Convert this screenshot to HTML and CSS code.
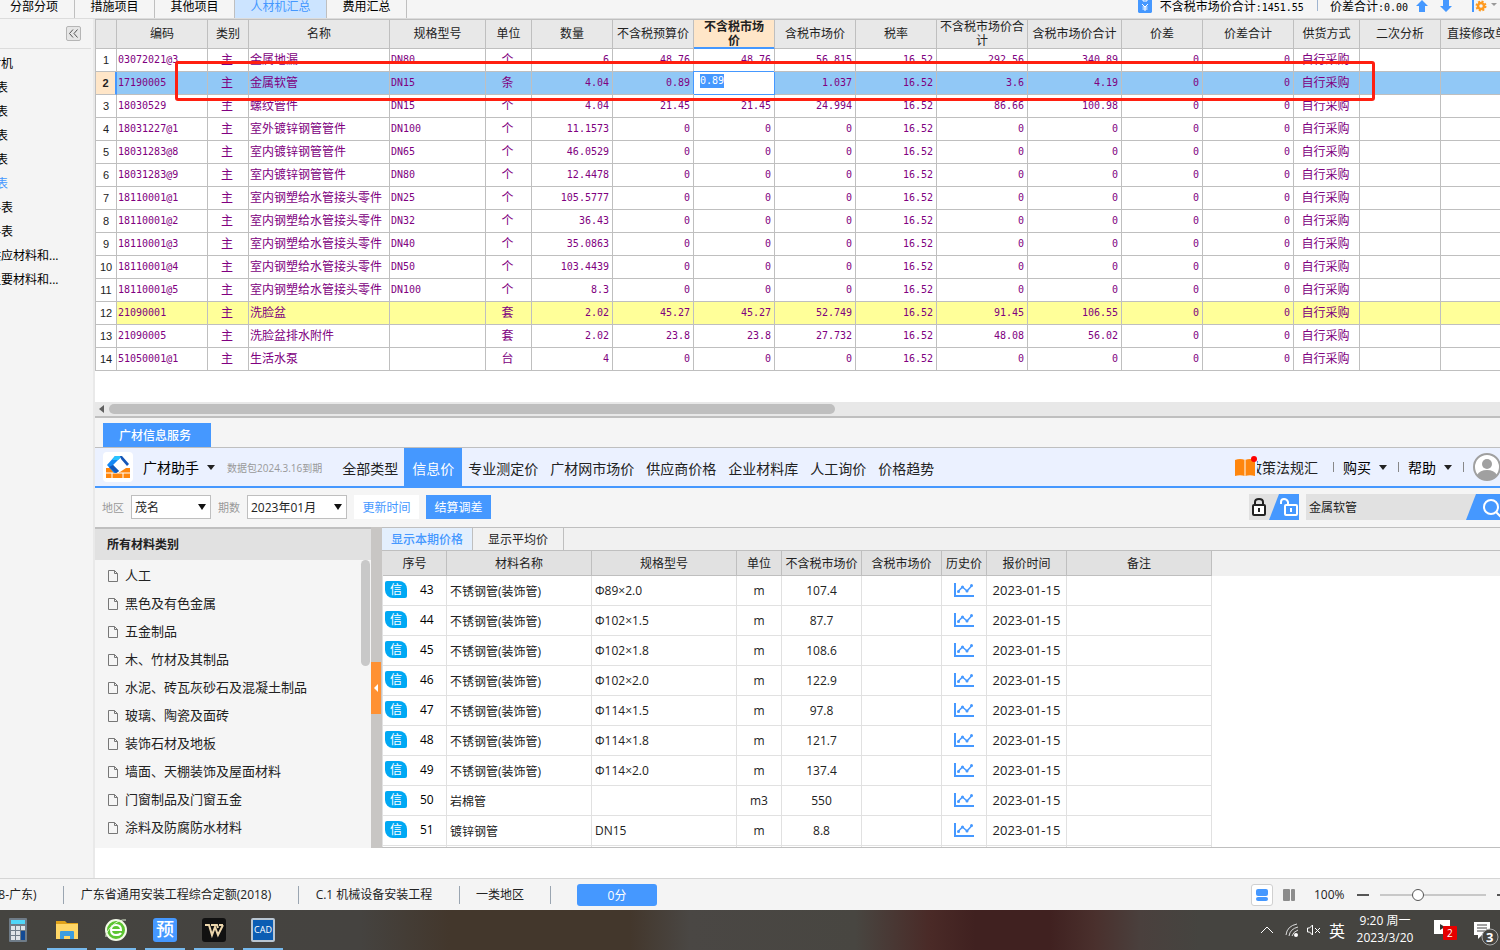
FILE: index.html
```html
<!DOCTYPE html>
<html lang="zh-CN">

<head>
  <meta charset="UTF-8" />
  <meta name="viewport" content="width=device-width, initial-scale=1.0" />
  <title>人材机汇总</title>
  <link rel="stylesheet" href="styles.css">
</head>

<body>
  <header class="top-bar">
    <nav class="top-tabs">
      <a href="#" class="w75">分部分项</a>
      <a href="#">措施项目</a>
      <a href="#">其他项目</a>
      <a href="#" class="active">人材机汇总</a>
      <a href="#">费用汇总</a>
    </nav>
    <div class="totals">
      <svg width="14" height="13" viewBox="0 0 14 13">
        <path d="M0 0h14v12l-1 1H1l-1-1z" fill="#4598ff" />
        <path d="M5 0v1h4V0M4 4l3 3 3-3M7 7v4M4.500 7h5M4.500 9h5" fill="none" stroke="#fff" />
      </svg>
      <span>不含税市场价合计<span class="mono">:1451.55</span></span>
      <i class="sep"></i>
      <span>价差合计<span class="mono">:0.00</span></span>
      <svg class="arrow" width="12" height="12" viewBox="0 0 12 12"><path d="M6 0l6 6H9v6H3V6H0z" fill="#4598ff" /></svg>
      <svg class="arrow" width="12" height="12" viewBox="0 0 12 12"><path d="M6 12l6-6H9V0H3v6H0z" fill="#4598ff" /></svg>
      <svg class="gear" width="26" height="12" viewBox="0 0 26 12">
        <path d="M0 0h2v12H0z" fill="#4598ff" />
        <circle cx="9" cy="6" r="3" fill="none" stroke="#ff9a1f" stroke-width="2.500" />
        <circle cx="9" cy="6" r="4.500" fill="none" stroke="#ff9a1f" stroke-width="2" stroke-dasharray="2 1.530" />
        <path d="M19 3h6l-3 3z" fill="#999" />
      </svg>
    </div>
  </header>

  <div class="workspace">
    <aside class="sidebar">
      <div class="sidebar-head">
        <button class="collapse" aria-label="收起">
          <svg width="9" height="9" viewBox="0 0 9 9"><path d="M4 0.500L0.500 4.500L4 8.500M8.500 0.500L5 4.500L8.500 8.500" fill="none" stroke="#555" /></svg>
        </button>
      </div>
      <ul class="report-list">
        <li class="wide">材机</li>
        <li>表</li>
        <li>表</li>
        <li>表</li>
        <li>表</li>
        <li class="current">表</li>
        <li class="wide">料表</li>
        <li class="wide">料表</li>
        <li class="wide">供应材料和...</li>
        <li class="wide">主要材料和...</li>
      </ul>
    </aside>

    <main class="main">
      <section class="grid-area">
        <table class="grid">
          <colgroup>
            <col class="c21"><col class="c91"><col class="c41"><col class="c141"><col class="c96"><col class="c46">
            <col class="c81"><col class="c81"><col class="c81"><col class="c81"><col class="c81"><col class="c91">
            <col class="c94"><col class="c81"><col class="c91"><col class="c66"><col class="c81"><col class="c91">
          </colgroup>
          <thead>
            <tr>
              <th></th><th>编码</th><th>类别</th><th>名称</th><th>规格型号</th><th>单位</th><th>数量</th>
              <th>不含税预算价</th><th class="focus">不含税市场<br>价</th><th>含税市场价</th><th>税率</th>
              <th>不含税市场价合<br>计</th><th>含税市场价合计</th><th>价差</th><th>价差合计</th><th>供货方式</th>
              <th>二次分析</th><th class="last">直接修改单价</th>
            </tr>
          </thead>
          <tbody id="gridBody"></tbody>
        </table>
        <div class="mark"></div>
      </section>
      <div class="h-scroll">
        <svg width="6" height="8" viewBox="0 0 6 8"><path d="M5 0v8L0 4z" fill="#606060" /></svg>
        <div class="thumb"></div>
      </div>

      <div class="service-head"><button class="service-tab">广材信息服务</button></div>

      <div class="helper-bar">
        <svg class="logo" width="30" height="30" viewBox="0 0 30 30">
          <rect width="30" height="30" rx="4" fill="#fff" />
          <path d="M3 16h5l5 4h4l6-4h4v10H3z" fill="#ff860d" />
          <path d="M3 21h24M15 20v1M9 21v5M20 21v5M15 21l4-4" stroke="#fff" fill="none" />
          <path d="M4 13l8-9h7L10 13l6 6-3 2H11z" fill="#1487f5" />
          <path d="M12 4h7l-4 4H9z" fill="#29c3ff" />
          <path d="M17 4h2l7 8-2 2-6-7zM10 13l6 6-3 2-7-6z" fill="#1456b8" />
        </svg>
        <button class="menu helper-name">广材助手</button>
        <span class="expiry">数据包2024.3.16到期</span>
        <nav class="price-nav">
          <a href="#">全部类型</a>
          <a href="#" class="active">信息价</a>
          <a href="#">专业测定价</a>
          <a href="#">广材网市场价</a>
          <a href="#">供应商价格</a>
          <a href="#">企业材料库</a>
          <a href="#">人工询价</a>
          <a href="#">价格趋势</a>
        </nav>
        <div class="account">
          <svg width="22" height="22" viewBox="0 0 22 22">
            <path d="M0 4q5-2 10 0v16q-5-1.500-10 0zM10 4q5-2 10 0v16q-5-1.500-10 0z" fill="#ff860d" />
            <path d="M10 4v16" stroke="#ffc182" stroke-width="2" />
            <circle cx="19" cy="3" r="3" fill="#f00" />
          </svg>
          <a href="#" class="policy"><span>政策法规汇</span></a>
          <i class="sep"></i>
          <button class="menu">购买</button>
          <i class="sep"></i>
          <button class="menu">帮助</button>
          <i class="sep"></i>
          <svg class="avatar" width="28" height="28" viewBox="0 0 28 28">
            <circle cx="14" cy="14" r="13" fill="#fff" stroke="#a0a0a0" stroke-width="2" />
            <circle cx="14" cy="11" r="5" fill="#a0a0a0" />
            <path d="M4 22q3-5 10-5t10 5q-4 5-10 5T4 22z" fill="#a0a0a0" />
          </svg>
        </div>
      </div>

      <div class="filters">
        <label for="area">地区</label>
        <span class="select area"><select id="area"><option>茂名</option></select></span>
        <label for="period">期数</label>
        <span class="select period"><select id="period"><option>2023年01月</option></select></span>
        <button class="btn">更新时间</button>
        <button class="btn primary">结算调差</button>
        <div class="search">
          <button class="lock" aria-label="锁定">
            <svg width="50" height="26" viewBox="0 0 50 26">
              <path d="M0 0h50v26H0z" fill="#e1e1e1" />
              <path d="M30 0h20v26H20z" fill="#4598ff" />
              <rect x="4" y="11" width="12" height="10" rx="1" fill="#fff" stroke="#222" stroke-width="2" />
              <path d="M6 11V8q0-3 4-3t4 3v3" fill="none" stroke="#222" stroke-width="2" />
              <path d="M10 14v4" stroke="#222" stroke-width="2" />
              <rect x="36" y="11" width="12" height="10" rx="1" fill="none" stroke="#fff" stroke-width="2" />
              <path d="M32 10V8q0-3 3-3t4 3v3M42 14v4" fill="none" stroke="#fff" stroke-width="2" />
            </svg>
          </button>
          <input type="text" value="金属软管" aria-label="搜索材料">
          <button class="find" aria-label="搜索">
            <svg width="34" height="26" viewBox="0 0 34 26">
              <path d="M0 26L10 0h24v26z" fill="#4598ff" />
              <circle cx="25" cy="13" r="7" fill="none" stroke="#fff" stroke-width="2" />
              <path d="M30 18l5 5" stroke="#fff" stroke-width="2" />
            </svg>
          </button>
        </div>
      </div>

      <div class="lower">
        <section class="categories">
          <h2>所有材料类别</h2>
          <ul id="categoryList"></ul>
          <div class="v-thumb"></div>
        </section>
        <div class="splitter">
          <button aria-label="收起分类"><svg width="4" height="8" viewBox="0 0 4 8"><path d="M4 0v8L0 4z" fill="#fff" /></svg></button>
        </div>
        <section class="prices">
          <div class="price-tabs">
            <button class="active">显示本期价格</button>
            <button>显示平均价</button>
          </div>
          <div class="price-body">
            <table class="price-table">
              <colgroup>
                <col class="p64"><col class="p145"><col class="p145"><col class="p45"><col class="p80">
                <col class="p80"><col class="p45"><col class="p80"><col class="p145">
              </colgroup>
              <thead>
                <tr>
                  <th>序号</th><th>材料名称</th><th>规格型号</th><th>单位</th><th>不含税市场价</th>
                  <th>含税市场价</th><th>历史价</th><th>报价时间</th><th>备注</th>
                </tr>
              </thead>
              <tbody id="priceBody"></tbody>
            </table>
          </div>
        </section>
      </div>
    </main>
  </div>

  <footer class="status">
    <span class="s-first">8-广东)</span>
    <span class="s-quota">广东省通用安装工程综合定额(2018)</span>
    <span class="s-work">C.1 机械设备安装工程</span>
    <span class="s-area">一类地区</span>
    <button class="score">0分</button>
    <div class="zoom">
      <button class="view on" aria-label="上下视图"><svg width="12" height="12" viewBox="0 0 12 12"><rect width="12" height="7" rx="2" fill="#4598ff" /><rect y="8" width="12" height="4" rx="2" fill="#4598ff" /></svg></button>
      <button class="view" aria-label="左右视图"><svg width="12" height="12" viewBox="0 0 12 12"><rect width="7" height="12" rx="1" fill="#8c8c8c" /><rect x="8" width="4" height="12" rx="1" fill="#8c8c8c" /></svg></button>
      <label for="zoomRange">100%</label>
      <svg width="12" height="2" viewBox="0 0 12 2"><path d="M0 0h12v2H0z" fill="#555" /></svg>
      <input type="range" id="zoomRange" min="0" max="100" value="34">
      <svg width="3" height="2" viewBox="0 0 3 2"><path d="M0 0h3v2H0z" fill="#555" /></svg>
    </div>
  </footer>

  <div class="taskbar">
    <div class="apps">
      <button aria-label="计算器">
        <svg width="24" height="24" viewBox="0 0 24 24">
          <rect x="3" width="18" height="24" rx="1" fill="#6f7c88" />
          <path d="M5 2h14v4H5z" fill="#4fd6f8" />
          <path d="M5 8h4v4H5zM10 8h4v4h-4zM15 8h4v4h-4zM5 13h4v4H5zM10 13h4v4h-4zM5 18h4v4H5zM10 18h4v4h-4z" fill="#dfe4e8" />
          <path d="M15 13h4v9h-4z" fill="#124a94" />
        </svg>
      </button>
      <button class="open" aria-label="文件资源管理器">
        <svg width="24" height="24" viewBox="0 0 24 24">
          <path d="M1 3h9l2 2h11v16H1z" fill="#e0a21a" />
          <path d="M1 6h22v15H1z" fill="#ffd767" />
          <path d="M5 21v-7q0-1 1-1h12q1 0 1 1v7h-4v-3H9v3z" fill="#3c9de0" />
        </svg>
      </button>
      <button class="open" aria-label="浏览器">
        <svg width="24" height="24" viewBox="0 0 24 24">
          <circle cx="12" cy="12" r="10" fill="#5cc431" stroke="#f4fbe9" stroke-width="2" />
          <path d="M7 12h10q0-5-5-5t-5 5q0 5 5 5 4 0 5-2" fill="none" stroke="#fff" stroke-width="2" />
          <path d="M2 19Q1 15 8 8t14-6" fill="none" stroke="#e6f7d8" />
        </svg>
      </button>
      <button class="open"><span class="budget">预</span></button>
      <button class="open" aria-label="文档">
        <svg width="24" height="24" viewBox="0 0 24 24">
          <rect width="24" height="24" rx="3" fill="#111" />
          <path d="M3 7h4l3 10 3-8 3 8 5-10M9 7h6l1 3M17 7h4" fill="none" stroke="#ecd6ac" stroke-width="2" />
        </svg>
      </button>
      <button class="open"><span class="cad">CAD</span></button>
    </div>
    <div class="tray">
      <svg width="12" height="8" viewBox="0 0 12 8"><path d="M0 7l6-6 6 6" fill="none" stroke="#fff" /></svg>
      <svg width="14" height="14" viewBox="0 0 14 14">
        <path d="M1 12Q2 3 12 1M4 13Q5 6 13 4M7 13Q8 9 13 7" fill="none" stroke="#ddd" />
        <circle cx="11" cy="12" r="2" fill="#fff" />
      </svg>
      <svg width="14" height="12" viewBox="0 0 14 12"><path d="M0.500 4h2l3-3v10l-3-3h-2zM8 4l5 5M13 4l-5 5" fill="none" stroke="#fff" /></svg>
      <span class="ime">英</span>
      <div class="clock">9:20 周一<br>2023/3/20</div>
      <svg class="video" width="24" height="22" viewBox="0 0 24 22">
        <path d="M0 1h16v14H0z" fill="#fff" /><path d="M6 5v6l5-3z" fill="#333" />
        <rect x="9" y="7" width="14" height="14" rx="1" fill="#e60000" />
        <text x="13" y="18">2</text>
      </svg>
      <svg class="notice" width="26" height="26" viewBox="0 0 26 26">
        <path d="M0 2h16v13H8l-4 4v-4H0z" fill="#fff" /><path d="M3 5h10M3 8h10M3 11h10" stroke="#444" />
        <circle cx="16" cy="17" r="8" fill="#454440" stroke="#aaa" />
        <text x="12" y="22">3</text>
      </svg>
    </div>
  </div>
  <script src="script.js"></script>
</body>

</html>
```

FILE: styles.css
```css
* {
  box-sizing: border-box;
}

body {
  margin: 0;
  height: 100vh;
  display: flex;
  flex-direction: column;
  overflow: hidden;
  font-family: "Open Sans", "Noto Sans CJK SC", sans-serif;
  font-size: 12px;
  color: #222;
  background: #f5f5f5;
}

button,
input,
select {
  font: inherit;
  color: inherit;
  border: none;
  padding: 0;
  margin: 0;
  background: none;
}

a {
  color: inherit;
  text-decoration: none;
}

ul {
  list-style: none;
  margin: 0;
  padding: 0;
}

svg {
  display: block;
  flex: none;
}

.mono {
  font-family: "DejaVu Sans Mono", monospace;
  font-size: 10px;
}

/* top tabs */
.top-bar {
  flex: none;
  height: 19px;
  display: flex;
  justify-content: space-between;
  line-height: 14px;
  color: #000;
  border-bottom: 1px solid #dcdcdc;
}

.top-tabs {
  display: flex;
}

.top-tabs a {
  width: 80px;
  text-align: center;
  border-right: 1px solid #bfbfbf;
}

.top-tabs .w75 {
  width: 75px;
  padding-right: 6px;
}

.top-tabs .active {
  width: 92px;
  background: #cce4ff;
  color: #4598ff;
}

.totals {
  display: flex;
  padding-right: 2px;
  gap: 8px;
}

.totals .sep {
  width: 1px;
  height: 11px;
  margin: 0 4px 0 5px;
  background: #9fb4d0;
}

.totals .arrow {
  margin-right: 4px;
}

.totals .gear {
  margin-left: 8px;
}

/* left sidebar */
.workspace {
  flex: 1;
  min-height: 0;
  display: flex;
}

.sidebar {
  flex: none;
  width: 95px;
  overflow: hidden;
  background: #f4f4f4;
  border-right: 2px solid #e9e9e9;
}

.sidebar-head {
  display: flex;
  justify-content: flex-end;
  height: 30px;
  padding: 7px 10px 0 0;
  margin-right: 2px;
  border-bottom: 1px solid #dcdcdc;
}

.collapse {
  width: 15px;
  height: 15px;
  display: flex;
  align-items: center;
  justify-content: center;
  background: #e6e6e6;
  border: 1px solid #b5b5b5;
  border-radius: 2px;
}

.report-list {
  padding-top: 3px;
  color: #000;
}

.report-list li {
  height: 24px;
  line-height: 24px;
  margin-left: -4px;
  white-space: nowrap;
}

.report-list .wide {
  margin-left: -11px;
}

.report-list .current {
  color: #4598ff;
}

.main {
  flex: 1;
  min-width: 0;
  display: flex;
  flex-direction: column;
  background: #fff;
}

/* material grid */
.grid-area {
  flex: 1;
  min-height: 0;
  position: relative;
  overflow: hidden;
}

.grid {
  width: 1436px;
  table-layout: fixed;
  border-collapse: separate;
  border-spacing: 0;
  border-top: 1px solid #bfbfbf;
  border-left: 1px solid #bfbfbf;
}

.c21 { width: 21px; }
.c41 { width: 41px; }
.c46 { width: 46px; }
.c66 { width: 66px; }
.c81 { width: 81px; }
.c91 { width: 91px; }
.c94 { width: 94px; }
.c96 { width: 96px; }
.c141 { width: 141px; }

.grid th,
.grid td {
  border-right: 1px solid #bfbfbf;
  border-bottom: 1px solid #bfbfbf;
  white-space: nowrap;
}

.grid th {
  height: 29px;
  padding: 0;
  line-height: 14px;
  font-weight: normal;
  background: #e8e8e8;
}

.grid th.last {
  padding-right: 6px;
}

.grid th.focus {
  font-weight: bold;
  background: #ffe6c8;
  border-bottom-color: #4598ff;
  box-shadow: inset 0 -1px #4598ff;
}

.grid td {
  height: 23px;
  padding: 1px 3px 1px 1px;
  line-height: 20px;
  color: #800080;
}

.grid .no {
  padding: 0;
  text-align: center;
  color: #222;
  font-family: "Liberation Sans", sans-serif;
  font-size: 11px;
}

.grid .mid {
  text-align: center;
}

.grid .num {
  text-align: right;
}

.grid .selected td {
  background: #91c8f6;
}

.grid .selected .no {
  font-weight: bold;
  background: #ffe6c8;
  border-right: 2px solid #4598ff;
}

.grid .yellow td:not(.no) {
  background: #ffff99;
}

.grid .selected .editing {
  padding: 0 6px 5px;
  background: #fff;
  border-color: #4598ff;
  box-shadow: -1px -1px #4598ff;
}

.editing input {
  display: block;
  width: 24px;
  height: 14px;
  background: #4598ff;
  color: #fff;
}

.mark {
  position: absolute;
  top: 42px;
  left: 80px;
  width: 1200px;
  height: 40px;
  border: 3px solid #ff1f10;
  border-radius: 3px;
}

.h-scroll {
  flex: none;
  height: 16px;
  display: flex;
  align-items: center;
  gap: 8px;
  background: #e8e8e8;
  border-bottom: 2px solid #bfbfbf;
}

.h-scroll svg {
  margin-left: 4px;
  margin-right: -4px;
}

.h-scroll .thumb {
  width: calc(52% - 5px);
  height: 10px;
  border-radius: 5px;
  background: #bfbfbf;
}

/* price service */
.service-head {
  flex: none;
  height: 30px;
  padding: 5px 8px 0;
  background: #f5f5f5;
  border-bottom: 1px solid #bfbfbf;
}

.service-tab {
  display: block;
  width: 108px;
  height: 24px;
  padding-right: 4px;
  color: #fff;
  background: #4598ff;
  font-weight: 500;
}

.helper-bar {
  flex: none;
  height: 40px;
  display: flex;
  align-items: center;
  padding-left: 8px;
  font-size: 14px;
  background: #ebf1ff;
  border-bottom: 2px solid #4598ff;
  white-space: nowrap;
}

.menu {
  display: flex;
  align-items: center;
  gap: 8px;
  color: #000;
}

.menu::after {
  content: "";
  border: 4px solid transparent;
  border-top: 5px solid #222;
  border-bottom: none;
}

.helper-name {
  margin-left: 10px;
}

.expiry {
  margin: 0 14px 0 12px;
  font-size: 10px;
  color: #999;
}

.price-nav {
  display: flex;
  height: 38px;
  line-height: 42px;
}

.price-nav a {
  padding: 0 6px;
}

.price-nav .active {
  padding: 0 8px;
  color: #fff;
  background: #4598ff;
}

.account {
  display: flex;
  align-items: center;
  margin-left: auto;
  margin-right: -1px;
}

.policy {
  display: flex;
  justify-content: flex-end;
  width: 61px;
  overflow: hidden;
}

.account .sep {
  width: 1px;
  height: 10px;
  margin: 0 9px 0 11px;
  background: #888;
}

.account .policy + .sep {
  margin-left: 15px;
}

.filters {
  flex: none;
  height: 39px;
  display: flex;
  align-items: center;
  gap: 7px;
  padding-left: 7px;
  padding-bottom: 1px;
  background: #f5f5f5;
}

.filters label {
  width: 22px;
  font-size: 11px;
  color: #999;
}

.select {
  position: relative;
}

.select.area {
  width: 80px;
}

.select.period {
  width: 100px;
}

.select select {
  display: block;
  width: 100%;
  height: 24px;
  padding-left: 3px;
  appearance: none;
  background: #fff;
  border: 1px solid #bfbfbf;
}

.select::after {
  content: "";
  position: absolute;
  right: 5px;
  top: 9px;
  border: 4px solid transparent;
  border-top: 6px solid #111;
  border-bottom: none;
}

.btn {
  width: 65px;
  height: 24px;
  color: #4598ff;
  background: #fff;
}

.btn.primary {
  color: #fff;
  background: #4598ff;
}

.search {
  display: flex;
  margin-left: auto;
}

.search input {
  width: 160px;
  height: 26px;
  margin-left: 7px;
  padding-left: 3px;
  background: #e1e1e1;
}

.find {
  background: #e1e1e1;
}

.lower {
  flex: none;
  height: 321px;
  margin-bottom: 30px;
  display: flex;
}

.categories {
  position: relative;
  flex: none;
  width: 276px;
  background: #f5f5f5;
  border-top: 2px solid #bfbfbf;
}

.categories h2 {
  margin: 0;
  padding-left: 12px;
  font-size: 12px;
  line-height: 31px;
  background: #e1e1e1;
}

.categories ul {
  padding: 0 0 0 13px;
}

.categories li {
  display: flex;
  align-items: center;
  gap: 7px;
  height: 28px;
  font-size: 13px;
}

.categories li svg {
  margin-top: 3px;
}

.v-thumb {
  position: absolute;
  top: 31px;
  right: 1px;
  width: 9px;
  height: 106px;
  border-radius: 5px;
  background: #c8c8c8;
}

.splitter {
  flex: none;
  width: 11px;
  padding-top: 135px;
  background: #c8c6c4;
}

.splitter button {
  display: flex;
  align-items: center;
  justify-content: center;
  width: 10px;
  height: 52px;
  background: #ff9133;
}

.prices {
  flex: 1;
  min-width: 0;
  display: flex;
  flex-direction: column;
  overflow: hidden;
  border-top: 1px solid #bfbfbf;
  border-bottom: 1px solid #bfbfbf;
}

.price-tabs {
  flex: none;
  display: flex;
  height: 23px;
  background: #f1f1f1;
  border-bottom: 1px solid #bfbfbf;
}

.price-tabs button {
  width: 91px;
  border-right: 1px solid #bfbfbf;
}

.price-tabs .active {
  color: #4598ff;
  font-weight: 500;
  background: #e3effd;
}

.price-body {
  flex: 1;
  min-height: 0;
  overflow: hidden;
  background: linear-gradient(#f0f0f0 25px, #fff 25px);
}

.price-table {
  width: 830px;
  table-layout: fixed;
  border-collapse: separate;
  border-spacing: 0;
  border-left: 1px solid #e1e1e1;
}

.p45 { width: 45px; }
.p64 { width: 64px; }
.p80 { width: 80px; }
.p145 { width: 145px; }

.price-table th {
  height: 25px;
  padding: 0;
  font-weight: normal;
  white-space: nowrap;
  background: #e1e1e1;
  border-right: 1px solid #bfbfbf;
  border-bottom: 1px solid #bfbfbf;
}

.price-table td {
  height: 30px;
  padding: 0 3px;
  text-align: center;
  background: #fff;
  border-right: 1px solid #e1e1e1;
  border-bottom: 1px solid #e1e1e1;
}

.price-table td:first-child {
  padding: 0 2px 2px;
}

.price-table .left {
  text-align: left;
}

.price-table .date {
  padding-bottom: 2px;
  font-size: 13px;
}

.price-table .chart {
  padding-bottom: 2px;
}

.chart svg {
  margin: 0 auto;
}

.serial {
  display: flex;
  align-items: center;
  gap: 13px;
  color: #000;
}

.badge {
  width: 22px;
  height: 17px;
  line-height: 17px;
  color: #fff;
  background: #00a8f3;
  border-radius: 2px 8px 2px 8px;
}

/* status bar */
.status {
  flex: none;
  height: 32px;
  display: flex;
  align-items: center;
  background: #f4f4f4;
  border-top: 1px solid #d5d5d5;
  white-space: nowrap;
}

.status > span {
  height: 18px;
  line-height: 18px;
  text-align: center;
  border-right: 1px solid #9aa5b1;
}

.s-first {
  width: 67px;
  margin-left: -3px;
  padding-right: 25px;
}

.s-quota {
  width: 235px;
  padding-right: 10px;
}

.s-work {
  width: 161px;
  padding-right: 10px;
}

.s-area {
  width: 91px;
  padding-right: 10px;
}

.score {
  width: 80px;
  height: 22px;
  margin-left: 26px;
  color: #fff;
  background: #4598ff;
  border-radius: 3px;
}

.zoom {
  display: flex;
  align-items: center;
  margin-left: auto;
}

.view {
  display: flex;
  align-items: center;
  justify-content: center;
  width: 22px;
  height: 22px;
  margin-right: 5px;
  border: 1px solid transparent;
  border-radius: 3px;
}

.view.on {
  background: #fff;
  border-color: #d0d0d0;
}

.zoom label {
  width: 43px;
  margin-left: 9px;
}

.zoom input {
  appearance: none;
  width: 106px;
  height: 12px;
  margin: 0 11px;
  background: linear-gradient(transparent 5px, #c8c8c8 5px, #c8c8c8 7px, transparent 7px);
}

.zoom input::-webkit-slider-thumb {
  appearance: none;
  width: 12px;
  height: 12px;
  border: 1px solid #555;
  border-radius: 50%;
  background: #fff;
}

/* system taskbar */
.taskbar {
  flex: none;
  height: 40px;
  display: flex;
  justify-content: space-between;
  color: #fff;
  background: linear-gradient(to right, #454440, #454340 24%, #43372c 30%, #43372c 42%, #4a4744 46%, #484641 57%, #4a2a27 62%, #402120 65%, #402120 70%, #4a302d 73%, #4a403d 76%, #454440 80%);
}

.apps {
  display: flex;
  gap: 9px;
  margin-left: -2px;
}

.apps button {
  width: 40px;
  height: 40px;
  display: flex;
  align-items: center;
  justify-content: center;
  border-top: 2px solid transparent;
  border-bottom: 2px solid transparent;
}

.apps .open {
  border-bottom-color: #76b9ed;
}

.budget,
.cad {
  width: 24px;
  height: 24px;
  text-align: center;
  color: #fff;
}

.budget {
  font-size: 18px;
  font-weight: 500;
  line-height: 23px;
  border-radius: 3px;
  background: #4598ff;
}

.cad {
  font-size: 9px;
  line-height: 20px;
  border: 2px solid #b9c6d2;
  border-radius: 2px;
  background: #0b5db3;
}

.tray {
  display: flex;
  align-items: center;
}

.tray svg {
  margin-right: 12px;
}

.tray svg + svg {
  margin-right: 8px;
}

.ime {
  font-size: 16px;
}

.clock {
  width: 80px;
  text-align: center;
  line-height: 17px;
  padding-bottom: 2px;
}

.tray .video {
  margin: 0 16px 0 9px;
}

.tray .notice {
  margin: 6px 0 0;
}

.tray text {
  font-size: 10px;
  fill: #fff;
}

.tray .notice text {
  font-size: 13px;
  font-weight: bold;
}
```

FILE: script.js
```js
// code, name, spec, unit, quantity, budget price, market price, market price with tax, total, total with tax
const materials = [
  ["03072021@3", "金属地漏", "DN80", "个", "6", "48.76", "48.76", "56.815", "292.56", "340.89"],
  ["17190005", "金属软管", "DN15", "条", "4.04", "0.89", "0.89", "1.037", "3.6", "4.19"],
  ["18030529", "螺纹管件", "DN15", "个", "4.04", "21.45", "21.45", "24.994", "86.66", "100.98"],
  ["18031227@1", "室外镀锌钢管管件", "DN100", "个", "11.1573", "0", "0", "0", "0", "0"],
  ["18031283@8", "室内镀锌钢管管件", "DN65", "个", "46.0529", "0", "0", "0", "0", "0"],
  ["18031283@9", "室内镀锌钢管管件", "DN80", "个", "12.4478", "0", "0", "0", "0", "0"],
  ["18110001@1", "室内钢塑给水管接头零件", "DN25", "个", "105.5777", "0", "0", "0", "0", "0"],
  ["18110001@2", "室内钢塑给水管接头零件", "DN32", "个", "36.43", "0", "0", "0", "0", "0"],
  ["18110001@3", "室内钢塑给水管接头零件", "DN40", "个", "35.0863", "0", "0", "0", "0", "0"],
  ["18110001@4", "室内钢塑给水管接头零件", "DN50", "个", "103.4439", "0", "0", "0", "0", "0"],
  ["18110001@5", "室内钢塑给水管接头零件", "DN100", "个", "8.3", "0", "0", "0", "0", "0"],
  ["21090001", "洗脸盆", "", "套", "2.02", "45.27", "45.27", "52.749", "91.45", "106.55"],
  ["21090005", "洗脸盆排水附件", "", "套", "2.02", "23.8", "23.8", "27.732", "48.08", "56.02"],
  ["51050001@1", "生活水泵", "", "台", "4", "0", "0", "0", "0", "0"]
];

const categories = ["人工", "黑色及有色金属", "五金制品", "木、竹材及其制品", "水泥、砖瓦灰砂石及混凝土制品",
  "玻璃、陶瓷及面砖", "装饰石材及地板", "墙面、天棚装饰及屋面材料", "门窗制品及门窗五金", "涂料及防腐防水材料"];

const prices = [
  [43, "不锈钢管(装饰管)", "Φ89×2.0", "m", "107.4"],
  [44, "不锈钢管(装饰管)", "Φ102×1.5", "m", "87.7"],
  [45, "不锈钢管(装饰管)", "Φ102×1.8", "m", "108.6"],
  [46, "不锈钢管(装饰管)", "Φ102×2.0", "m", "122.9"],
  [47, "不锈钢管(装饰管)", "Φ114×1.5", "m", "97.8"],
  [48, "不锈钢管(装饰管)", "Φ114×1.8", "m", "121.7"],
  [49, "不锈钢管(装饰管)", "Φ114×2.0", "m", "137.4"],
  [50, "岩棉管", "", "m3", "550"],
  [51, "镀锌钢管", "DN15", "m", "8.8"]
];

const fileIcon = `<svg width="10" height="12" viewBox="0 0 10 12"><path d="M0.500 0.500h6l3 3v8h-9zM6.500 0.500v3h3" fill="none" stroke="#777" /></svg>`;
const chartIcon = `<svg width="20" height="14" viewBox="0 0 20 14"><path d="M1 0v13h19" fill="none" stroke="#4598ff" stroke-width="2" /><path d="M4 8.500l4.500-4.500 4.500 4 5-5.500" fill="none" stroke="#4598ff" stroke-width="1.500" /><g fill="#4598ff"><circle cx="4.500" cy="8.500" r="1.500" /><circle cx="8.500" cy="4" r="1.500" /><circle cx="13" cy="8" r="1.500" /><circle cx="17.500" cy="2.500" r="1.500" /></g></svg>`;

document.getElementById("gridBody").innerHTML = materials.map((m, i) => {
  const [code, name, spec, unit, qty, budget, market, taxed, total, taxedTotal] = m;
  const num = (v) => `<td class="num mono">${v}</td>`;
  const rowClass = i === 1 ? "selected" : i === 11 ? "yellow" : "";
  const marketCell = i === 1
    ? `<td class="editing mono"><input type="text" value="${market}" aria-label="不含税市场价"></td>`
    : num(market);
  return `<tr class="${rowClass}"><td class="no">${i + 1}</td><td class="mono">${code}</td><td class="mid">主</td>
    <td>${name}</td><td class="mono">${spec}</td><td class="mid">${unit}</td>${num(qty)}${num(budget)}${marketCell}
    ${num(taxed)}${num("16.52")}${num(total)}${num(taxedTotal)}${num(0)}${num(0)}
    <td class="mid">自行采购</td><td></td><td></td></tr>`;
}).join("");

document.getElementById("categoryList").innerHTML =
  categories.map((c) => `<li>${fileIcon}<span>${c}</span></li>`).join("");

document.getElementById("priceBody").innerHTML = prices.map(([no, name, spec, unit, price]) =>
  `<tr><td><div class="serial"><span class="badge">信</span>${no}</div></td><td class="left">${name}</td>
  <td class="left">${spec}</td><td>${unit}</td><td>${price}</td><td></td><td class="chart">${chartIcon}</td>
  <td class="date">2023-01-15</td><td></td></tr>`
).join("") + "<tr>" + "<td></td>".repeat(9) + "</tr>";
```
